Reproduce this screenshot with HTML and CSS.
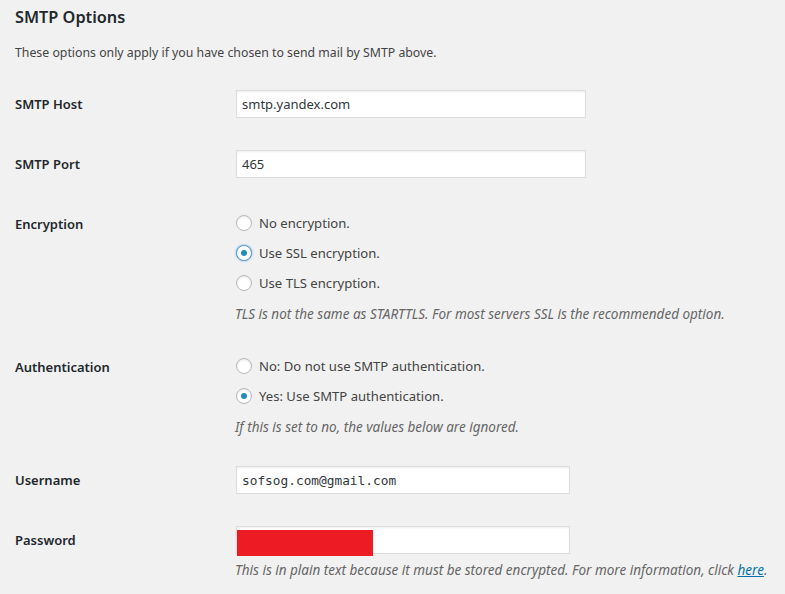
FILE: index.html
```html
<!DOCTYPE html>
<html>
<head>
<meta charset="utf-8">
<link rel="stylesheet" href="styles.css">
</head>
<body>
<div class="wrap">
  <h2 class="title">SMTP Options</h2>
  <p class="intro">These options only apply if you have chosen to send mail by SMTP above.</p>
  <table class="form-table">
    <tr>
      <th>SMTP Host</th>
      <td><input class="text" type="text" value="smtp.yandex.com"></td>
    </tr>
    <tr>
      <th>SMTP Port</th>
      <td><input class="text" type="text" value="465"></td>
    </tr>
    <tr>
      <th>Encryption</th>
      <td>
        <label class="opt"><input type="radio" name="enc"><span>No encryption.</span></label>
        <label class="opt"><input type="radio" name="enc" class="focus" checked><span>Use SSL encryption.</span></label>
        <label class="opt"><input type="radio" name="enc"><span>Use TLS encryption.</span></label>
        <p class="description">TLS is not the same as STARTTLS. For most servers SSL is the recommended option.</p>
      </td>
    </tr>
    <tr>
      <th>Authentication</th>
      <td>
        <label class="opt"><input type="radio" name="auth"><span>No: Do not use SMTP authentication.</span></label>
        <label class="opt"><input type="radio" name="auth" checked><span>Yes: Use SMTP authentication.</span></label>
        <p class="description">If this is set to no, the values below are ignored.</p>
      </td>
    </tr>
    <tr>
      <th>Username</th>
      <td><input class="text mono short" type="text" value="sofsog.com@gmail.com"></td>
    </tr>
    <tr>
      <th>Password</th>
      <td>
        <div class="pw">
          <input class="text short" type="text" value="">
          <div class="redact"></div>
        </div>
        <p class="description">This is in plain text because it must be stored encrypted. For more information, click <a href="#">here</a>.</p>
      </td>
    </tr>
  </table>
</div>
</body>
</html>
```
FILE: styles.css
```css
html, body {
  margin: 0;
  background: #f1f1f1;
}
body {
  font-family: "Noto Sans", "Open Sans", sans-serif;
  font-size: 13px;
  color: #444;
  line-height: 1.4;
}
.wrap {
  padding: 0 15px;
}
.title {
  margin: 0;
  padding-top: 5px;
  font-size: 16.3px;
  font-weight: 600;
  color: #23282d;
  line-height: 24px;
}
.intro {
  margin: 13px 0 0;
  line-height: 22px;
  font-size: 12.3px;
  color: #444;
}
.form-table {
  border-collapse: collapse;
  margin-top: 10px;
  width: 100%;
  table-layout: fixed;
}
.form-table th {
  width: 200px;
  padding: 20px 10px 20px 0;
  text-align: left;
  vertical-align: top;
  font-weight: 600;
  color: #23282d;
  line-height: 20px;
  font-size: 13px;
}
.form-table td {
  padding: 15px 10px;
  vertical-align: top;
}
.text {
  display: block;
  box-sizing: border-box;
  width: 350px;
  height: 28px;
  margin: 1px;
  padding: 3px 5px;
  border: 1px solid #ddd;
  box-shadow: inset 0 1px 2px rgba(0,0,0,.07);
  background: #fff;
  color: #32373c;
  font-family: "Noto Sans", "Open Sans", sans-serif;
  font-size: 13px;
  outline: none;
}
.short {
  width: 334px;
}
.mono {
  font-family: "DejaVu Sans Mono", "Liberation Mono", monospace;
  font-size: 12.8px;
}
.pw {
  position: relative;
}
.redact {
  position: absolute;
  left: 2px;
  top: 4px;
  width: 136px;
  height: 26px;
  background: #ed1c24;
}
.opt {
  display: flex;
  align-items: center;
  height: 30px;
}
.opt:first-child {
  margin-top: -1px;
}
.opt input {
  -webkit-appearance: none;
  appearance: none;
  box-sizing: border-box;
  width: 16px;
  height: 16px;
  margin: 0 7px 0 1px;
  border: 1px solid #b4b9be;
  border-radius: 50%;
  background: #fff;
  box-shadow: inset 0 1px 2px rgba(0,0,0,.1);
  position: relative;
  flex: none;
}
.opt input:checked::before {
  content: "";
  position: absolute;
  left: 4px;
  top: 4px;
  width: 6px;
  height: 6px;
  border-radius: 50%;
  background: #1e8cbe;
}
.opt input.focus {
  border-color: #5b9dd9;
  box-shadow: 0 0 2px rgba(30,140,190,.8);
}
.opt span {
  color: #444;
  font-size: 13.1px;
}
.description {
  margin: 6px 0 -2px;
  font-style: italic;
  font-size: 13.5px;
  color: #666;
  line-height: 20px;
  white-space: nowrap;
}
.description a {
  color: #0073aa;
  text-decoration: underline;
}
```
